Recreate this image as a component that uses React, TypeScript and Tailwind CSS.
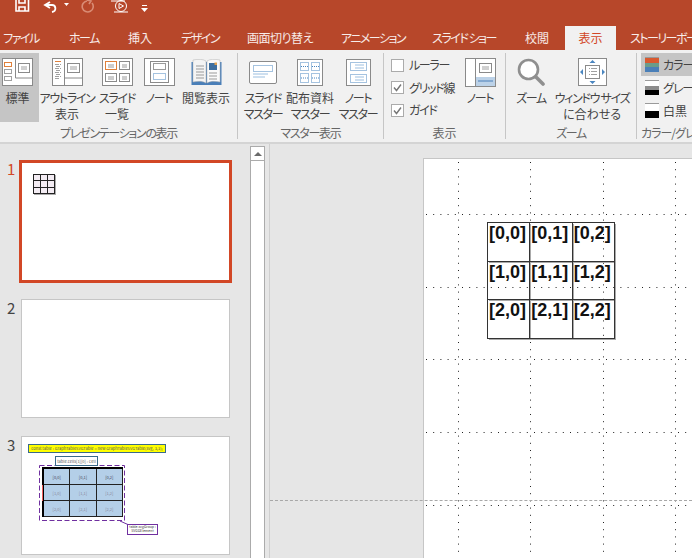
import React from "react";

const jp = "font-['Noto_Sans_CJK_JP','Noto_Sans',sans-serif] [font-feature-settings:'palt']";

const kana = (text: string) => (/[\u30a0-\u30ff]/.test(text) ? "tracking-[-1.3px]" : "");

function NormalIcon() {
  return (
    <svg width="31" height="28" viewBox="0 0 31 28" fill="none">
      <rect x=".5" y=".5" width="30" height="27" fill="#fff" stroke="#8a8a8a" />
      <path d="M13.5 1v19M13.500 20h17" stroke="#8a8a8a" />
      <rect x="2.5" y="4.5" width="7" height="4" fill="#fff" stroke="#e0803a" />
      <rect x="2.5" y="11.5" width="7" height="4" stroke="#a0a0a0" />
      <rect x="2.5" y="18.5" width="7" height="4" stroke="#a0a0a0" />
      <rect x="16.5" y="5.5" width="11" height="9" stroke="#8a8a8a" />
      <path d="M19 9h6M19 11h6" stroke="#a0a0a0" />
    </svg>
  );
}

function OutlineIcon() {
  return (
    <svg width="31" height="28" viewBox="0 0 31 28" fill="none">
      <rect x=".5" y=".5" width="30" height="27" fill="#fff" stroke="#8a8a8a" />
      <path d="M12.5 1v26M12.500 20h18" stroke="#8a8a8a" />
      <path d="M3 3.500h6" stroke="#e0803a" />
      <path d="M3 6.500h6M4 8.500h5M3 10.500h6M4 12.500h5M3 14.500h6M4 16.500h5M3 18.500h6M3 20.500h4" stroke="#a0a0a0" strokeDasharray="4 1" />
      <rect x="15.5" y="5.5" width="12" height="9" stroke="#8a8a8a" />
      <path d="M18 9h7M18 11h7" stroke="#a0a0a0" />
    </svg>
  );
}

function SorterIcon() {
  return (
    <svg width="31" height="28" viewBox="0 0 31 28" fill="none">
      <rect x=".5" y=".5" width="30" height="27" fill="#fff" stroke="#8a8a8a" />
      <rect x="3.5" y="3.500" width="11" height="8" stroke="#e0803a" />
      <rect x="17.5" y="3.500" width="10" height="8" stroke="#8a8a8a" />
      <rect x="3.5" y="15.5" width="11" height="8" stroke="#8a8a8a" />
      <rect x="17.5" y="15.5" width="10" height="8" stroke="#8a8a8a" />
      <path d="M6 7h6M6 9h6M20 7h5M20 9h5M6 19h6M6 21h6M20 19h5M20 21h5" stroke="#9a9a9a" />
    </svg>
  );
}

function NotesIcon() {
  return (
    <svg width="31" height="28" viewBox="0 0 31 28" fill="none">
      <rect x=".5" y=".5" width="30" height="27" fill="#fff" stroke="#8a8a8a" />
      <rect x="6.5" y="3.5" width="18" height="21" stroke="#8a8a8a" />
      <rect x="9.5" y="5.5" width="12" height="6" fill="#fff" stroke="#9a9a9a" />
      <rect x="9.5" y="15.5" width="12" height="6" stroke="#4a86c0" strokeDasharray="1 1" />
    </svg>
  );
}

function ReadingIcon() {
  return (
    <svg width="31" height="26" viewBox="0 0 31 26" fill="none">
      <path d="M.5 3h30v23H.5z" fill="#4a7fb8" />
      <path d="M2 1c5-1 10-1 13 1v22c-3-2-8-2-13-1z" fill="#f4f4f4" stroke="#b0b0b0" strokeWidth=".5" />
      <path d="M29 1c-5-1-10-1-13 1v22c3-2 8-2 13-1z" fill="#fafafa" stroke="#b0b0b0" strokeWidth=".5" />
      <path d="M5 7h8M5 10h8M5 13h8M5 16h8M5 19h8M18 14h8M18 17h8M18 20h8" stroke="#9a9a9a" />
      <rect x="18" y="4" width="8" height="7" fill="#3f6f9f" />
      <rect x="23.5" y="3.5" width="2.5" height="2.5" fill="#e0a050" />
    </svg>
  );
}

function SlideMasterIcon() {
  return (
    <svg width="28" height="23" viewBox="0 0 28 23" fill="none">
      <rect x=".5" y=".5" width="27" height="22" rx="1.5" fill="#fff" stroke="#8a8a8a" />
      <rect x="4.5" y="4.5" width="19" height="6" stroke="#4a86c0" strokeDasharray="1 1" />
      <path d="M4 13h15M4 16h12" stroke="#9cbfe0" />
    </svg>
  );
}

function HandoutIcon() {
  return (
    <svg width="26" height="27" viewBox="0 0 26 27" fill="none">
      <rect x=".5" y=".5" width="25" height="26" fill="#fff" stroke="#8a8a8a" />
      <rect x="3.5" y="3.5" width="8" height="8" stroke="#4a86c0" strokeDasharray="1 1" />
      <rect x="14.5" y="3.5" width="8" height="8" stroke="#4a86c0" strokeDasharray="1 1" />
      <rect x="3.5" y="14.5" width="8" height="9" stroke="#4a86c0" strokeDasharray="1 1" />
      <rect x="14.5" y="14.5" width="8" height="9" stroke="#4a86c0" strokeDasharray="1 1" />
      <path d="M4 7.500h7M15 7.500h7M4 19h7M15 19h7" stroke="#4a86c0" strokeDasharray="1 1" />
    </svg>
  );
}

function NotesMasterIcon() {
  return (
    <svg width="25" height="27" viewBox="0 0 25 27" fill="none">
      <rect x=".5" y=".5" width="24" height="26" fill="#fff" stroke="#8a8a8a" />
      <rect x="4.5" y="3.5" width="16" height="8" stroke="#4a86c0" strokeDasharray="1 1" />
      <rect x="4.5" y="15.5" width="16" height="8" stroke="#4a86c0" strokeDasharray="1 1" />
      <path d="M9 6h9M9 9h9M9 18h9M9 21h9" stroke="#9cbfe0" />
    </svg>
  );
}

function NotesViewIcon() {
  return (
    <svg width="31" height="29" viewBox="0 0 31 29" fill="none">
      <rect x=".5" y=".5" width="30" height="28" fill="#fff" stroke="#8a8a8a" />
      <path d="M10.5 1v27" stroke="#8a8a8a" />
      <rect x="14.5" y="5.5" width="12" height="9" stroke="#8a8a8a" />
      <path d="M17 9h7M17 11h7" stroke="#a0a0a0" />
      <rect x="11" y="19" width="19" height="9" fill="#bcd2e8" />
      <path d="M13 23h15" stroke="#4a7fb8" />
    </svg>
  );
}

function ZoomIcon() {
  return (
    <svg width="28" height="28" viewBox="0 0 28 28" fill="none">
      <circle cx="11.5" cy="11.5" r="9.500" fill="#fff" stroke="#8f8f8f" strokeWidth="2.6" />
      <path d="M19 19l7 7" stroke="#8f8f8f" strokeWidth="3.6" strokeLinecap="round" />
    </svg>
  );
}

function FitIcon() {
  return (
    <svg width="29" height="28" viewBox="0 0 29 28" fill="none">
      <rect x=".5" y=".5" width="28" height="27" fill="#fff" stroke="#8a8a8a" />
      <rect x="7.5" y="7.5" width="14" height="13" stroke="#8a8a8a" />
      <path d="M11 10.500h1M13 10.500h6M11 13.500h1M13 13.500h6M11 16.500h1M13 16.500h6" stroke="#a0a0a0" />
      <path d="M14.500 2l3 3h-6zM14.500 26l3-3h-6zM2 14l3-3v6zM27 14l-3-3v6z" fill="#4a86c0" />
    </svg>
  );
}

function Swatch({ colors }: { colors: string[] }) {
  return (
    <div className="w-[14px] h-[15px] shrink-0 flex flex-col border-t border-[#9a9a9a]">
      {colors.map((c, i) => (
        <div key={i} className="flex-1" style={{ background: c }} />
      ))}
    </div>
  );
}

function RibbonButton({ icon, lines, w, first, active }: { icon: React.ReactNode; lines: string[]; w: number; first?: boolean; active?: boolean }) {
  return (
    <div
      className={`flex flex-col items-center shrink-0 ${active ? "bg-[#c5c5c5]" : ""} ${first ? "pr-[4px]" : ""}`}
      style={{ width: w }}
    >
      <div className="h-[30px] mt-[4px] flex items-center justify-center">{icon}</div>
      <div className="text-[12px] leading-[16px] mt-[3px] text-[#444] text-center whitespace-nowrap">
        {lines.map((l) => (
          <div key={l} className={kana(l)}>
            {l}
          </div>
        ))}
      </div>
    </div>
  );
}

function Group({ label, w, children }: { label: string; w: number; children: React.ReactNode }) {
  return (
    <div className="flex flex-col shrink-0 border-r border-[#c6c6c6] h-[86px]" style={{ width: w }}>
      <div className="flex h-[69px]">{children}</div>
      <div className={`text-[12px] leading-[14px] mt-[4px] text-center text-[#666] whitespace-nowrap ${kana(label)}`}>{label}</div>
    </div>
  );
}

function Check({ label, checked }: { label: string; checked?: boolean }) {
  return (
    <div className="flex items-center gap-[5px] h-[22.500px]">
      <div className="w-[13px] h-[13px] border border-[#ababab] bg-white flex items-center justify-center">
        {checked && (
          <svg width="11" height="11" viewBox="0 0 11 11" fill="none">
            <path d="M2 5.5l2.500 3L9 2.500" stroke="#777" strokeWidth="1.4" />
          </svg>
        )}
      </div>
      <span className={`text-[12px] text-[#444] whitespace-nowrap ${kana(label)}`}>{label}</span>
    </div>
  );
}

// label, box width, gap before the box
const tabs: [string, number, number][] = [
  ["ファイル", 42, 0],
  ["ホーム", 42, 21],
  ["挿入", 28, 21],
  ["デザイン", 56, 18],
  ["画面切り替え", 68, 18],
  ["アニメーション", 80, 19],
  ["スライド ショー", 64, 19],
  ["校閲", 28, 27],
];

const cells = ["[0,0]", "[0,1]", "[0,2]", "[1,0]", "[1,1]", "[1,2]", "[2,0]", "[2,1]", "[2,2]"];

function Thumb({ n, active, children }: { n: number; active?: boolean; children?: React.ReactNode }) {
  return (
    <div className="flex items-start">
      <div className={`w-[19px] pl-[7px] text-[15px] leading-[17px] ${active ? "text-[#d24726]" : "text-[#444]"}`}>{n}</div>
      <div
        className={`relative bg-white ${
          active ? "w-[213px] h-[123px] border-[3px] border-[#d24726]" : "w-[209px] h-[119px] ml-[2px] border border-[#c6c6c6]"
        }`}
      >
        {children}
      </div>
    </div>
  );
}

function TinyTable() {
  return (
    <div className="absolute left-[11px] top-[11px] grid grid-cols-3 w-[22px] h-[20px] border-t border-l border-[#222] bg-white shadow-[1px_1px_0_#aaa]">
      {cells.map((c) => (
        <div key={c} className="border-r border-b border-[#222] bg-[#f3ecf3]" />
      ))}
    </div>
  );
}

function Thumb3Content() {
  return (
    <>
      <div className="absolute left-[6px] top-[7px] w-[138px] h-[9px] bg-[#ffff00] border border-[#3a6a8a] text-[4px] leading-[7px] text-center text-[#555] whitespace-nowrap overflow-hidden">
        const table : GraphTableSVGTable = new GraphTableSVGTable(svg, 3,3);
      </div>
      <svg className="absolute left-0 top-0" width="207" height="117" fill="none">
        <rect x="17.500" y="28.500" width="85" height="55" stroke="#7030a0" strokeDasharray="5 2.500" />
        <path d="M98 84l9 4" stroke="#7030a0" />
      </svg>
      <div className="absolute left-[20px] top-[30px] w-[81px] h-[50px] grid grid-cols-3 border-t-2 border-l-2 border-black bg-[#b4cfe8]">
        {cells.map((t, i) => (
          <div
            key={t}
            className={`border-r border-b border-[#222] text-[4px] flex items-center justify-center ${i < 3 ? "text-[#445]" : "text-[#889]"}`}
          >
            {t}
          </div>
        ))}
      </div>
      <div className="absolute left-[20px] top-[48px] w-[1px] h-[16px] bg-[#f06060]" />
      <div className="absolute left-[33px] top-[19px] w-[43px] h-[10px] bg-white border border-[#3a6a8a] text-[4px] leading-[8px] text-center text-[#555] whitespace-nowrap overflow-hidden">
        table.cells[1][0] : Cell
      </div>
      <div className="absolute left-[105px] top-[87px] w-[31px] h-[11px] bg-white border border-[#7030a0] text-[3.500px] leading-[4px] text-center text-[#333] overflow-hidden">
        table.svgGroup : SVGGElement
      </div>
    </>
  );
}

function GridDots() {
  const xs = [34.5, 106.5, 179.5, 251.5];
  const ys = [55.5, 128.5, 200.5, 273.5, 346.5];
  return (
    <svg className="absolute inset-0" width="269" height="400" fill="none">
      {xs.map((x) => (
        <path key={x} d={`M${x} 3V400`} stroke="#222" strokeDasharray="1 6.200" />
      ))}
      {ys.map((y) => (
        <path key={y} d={`M2 ${y}H269`} stroke="#222" strokeDasharray="1 6.200" />
      ))}
    </svg>
  );
}

export default function App() {
  return (
    <div className={`w-[692px] h-[558px] overflow-hidden flex flex-col bg-[#e6e6e6] ${jp}`}>
      {/* title bar + tabs */}
      <div className="h-[50px] bg-[#b7472a] shrink-0 flex flex-col">
        <div className="h-[26px] flex items-start pl-[12px] gap-[9px] text-white">
          <svg width="20" height="13" viewBox="0 0 20 13" fill="none">
            <path d="M4 0v11h12.500V0M7 0v3h6V0M7 11V7h6v4" stroke="#fff" strokeWidth="1.600" />
          </svg>
          <svg width="30" height="14" viewBox="0 0 30 14" fill="none">
            <path d="M9 2L4 5l5 3" stroke="#fff" strokeWidth="1.800" />
            <path d="M5 5h6c4 0 5 6 0 7" stroke="#fff" strokeWidth="1.800" />
            <path d="M23 3h5l-2.500 3z" fill="#fff" />
          </svg>
          <svg width="16" height="14" viewBox="0 0 16 14" fill="none">
            <path d="M12 3a5.500 5.500 0 1 1-5-2M7 0l4 1-2 3" stroke="#d98c75" strokeWidth="1.600" />
          </svg>
          <svg className="ml-[5px]" width="22" height="15" viewBox="0 0 22 15" fill="none">
            <path d="M1 1h14" stroke="#fff" />
            <circle cx="11" cy="6" r="5.500" stroke="#fff" />
            <path d="M9 3.500l4.500 2.500L9 8.500z" stroke="#fff" />
            <path d="M4 12h14" stroke="#fff" />
          </svg>
          <svg className="mt-[5px]" width="7" height="7" viewBox="0 0 7 7">
            <path d="M1 0h5v1H1zM0 3h7L3.500 7z" fill="#fff" />
          </svg>
        </div>
        <div className="h-[24px] flex items-center text-[12px] text-white/90">
          {tabs.map(([t, w, gap]) => (
            <div
              key={t}
              style={{ width: w, marginLeft: gap }}
              className={`whitespace-nowrap shrink-0 flex justify-center ${t === "画面切り替え" ? "tracking-[-0.5px]" : /[\u30a0-\u30ff]/.test(t) ? "tracking-[-1.5px]" : ""}`}
            >
              {t}
            </div>
          ))}
          <div className="w-[51px] h-[24px] ml-[14px] shrink-0 bg-[#f1f1f1] text-[#d24726] flex items-center justify-center">表示</div>
          <div className="ml-[14px] whitespace-nowrap tracking-[-1.5px]">ストーリーボード</div>
        </div>
      </div>

      {/* ribbon */}
      <div className="h-[94px] shrink-0 bg-[#f1f1f1] border-b-2 border-[#d4d4d4] pt-[3px] flex overflow-hidden">
        <Group label="プレゼンテーションの表示" w={238}>
          <RibbonButton w={39} first active icon={<NormalIcon />} lines={["標準"]} />
          <RibbonButton w={56} icon={<OutlineIcon />} lines={["アウトライン", "表示"]} />
          <RibbonButton w={44} icon={<SorterIcon />} lines={["スライド", "一覧"]} />
          <RibbonButton w={40} icon={<NotesIcon />} lines={["ノート"]} />
          <RibbonButton w={54} icon={<ReadingIcon />} lines={["閲覧表示"]} />
        </Group>
        <Group label="マスター表示" w={146}>
          <RibbonButton w={50} icon={<SlideMasterIcon />} lines={["スライド", "マスター"]} />
          <RibbonButton w={44} icon={<HandoutIcon />} lines={["配布資料", "マスター"]} />
          <RibbonButton w={52} icon={<NotesMasterIcon />} lines={["ノート", "マスター"]} />
        </Group>
        <Group label="表示" w={122}>
          <div className="w-[74px] pl-[7px] pt-[1px] shrink-0">
            <Check label="ルーラー" />
            <Check label="グリッド線" checked />
            <Check label="ガイド" checked />
          </div>
          <RibbonButton w={44} icon={<NotesViewIcon />} lines={["ノート"]} />
        </Group>
        <Group label="ズーム" w={131}>
          <RibbonButton w={50} icon={<ZoomIcon />} lines={["ズーム"]} />
          <RibbonButton w={72} icon={<FitIcon />} lines={["ウィンドウ サイズ", "に合わせる"]} />
        </Group>
        <div className="flex-1 min-w-0 pl-[4px] overflow-hidden">
          <div className="flex flex-col h-[69px] text-[12px] text-[#444] whitespace-nowrap tracking-[-1px]">
            <div className="flex items-center gap-[4px] h-[23px] pl-[4px] bg-[#c5c5c5]">
              <Swatch colors={["#d9592f", "#6a9c8a", "#4a7fb8"]} />
              カラー
            </div>
            <div className="flex items-center gap-[4px] h-[23px] pl-[4px]">
              <Swatch colors={["#fff", "#8c8c8c", "#000"]} />
              グレースケール
            </div>
            <div className="flex items-center gap-[4px] h-[23px] pl-[4px]">
              <Swatch colors={["#fff", "#000"]} />
              <span className="tracking-normal">白黒</span>
            </div>
          </div>
          <div className="text-[12px] leading-[14px] mt-[4px] text-[#666] whitespace-nowrap tracking-[-1px]">カラー/グレースケール</div>
        </div>
      </div>

      {/* workspace */}
      <div className="flex-1 flex min-h-0">
        <div className="w-[250px] shrink-0 flex flex-col gap-[16px] pt-[16px] overflow-hidden">
          <Thumb n={1} active>
            <TinyTable />
          </Thumb>
          <Thumb n={2} />
          <div className="mt-[2px]">
            <Thumb n={3}>
              <Thumb3Content />
            </Thumb>
          </div>
        </div>
        <div className="w-[15px] shrink-0 mt-[2px] bg-white border-x border-[#ababab] flex flex-col">
          <div className="h-[15px] border-y border-[#ababab] flex items-center justify-center">
            <svg width="8" height="4" viewBox="0 0 8 4">
              <path d="M4 0l4 4H0z" fill="#6a6a6a" />
            </svg>
          </div>
        </div>
        <div className="w-[5px] shrink-0 border-r border-[#cfcfcf]" />
        <div className="flex-1 relative pl-[153px] pt-[14px] overflow-hidden">
          <div className="relative w-[300px] h-[420px] bg-white border border-[#c6c6c6]">
            <GridDots />
            <div className="absolute left-[63px] top-[63px] w-[128px] h-[117px] grid grid-cols-3 grid-rows-3 border-t border-l border-[#333]">
              {cells.map((t) => (
                <div
                  key={t}
                  className="border-r border-b border-[#333] shadow-[1px_1px_0_#aaa] font-['Liberation_Sans',sans-serif] font-bold text-[18px] leading-[20px] pl-[1px] text-[#111] whitespace-nowrap"
                >
                  {t}
                </div>
              ))}
            </div>
          </div>
          {/* guide */}
          <div className="absolute left-0 right-0 top-[356px] border-t border-dashed border-[#a8a8a8]" />
        </div>
      </div>
    </div>
  );
}
